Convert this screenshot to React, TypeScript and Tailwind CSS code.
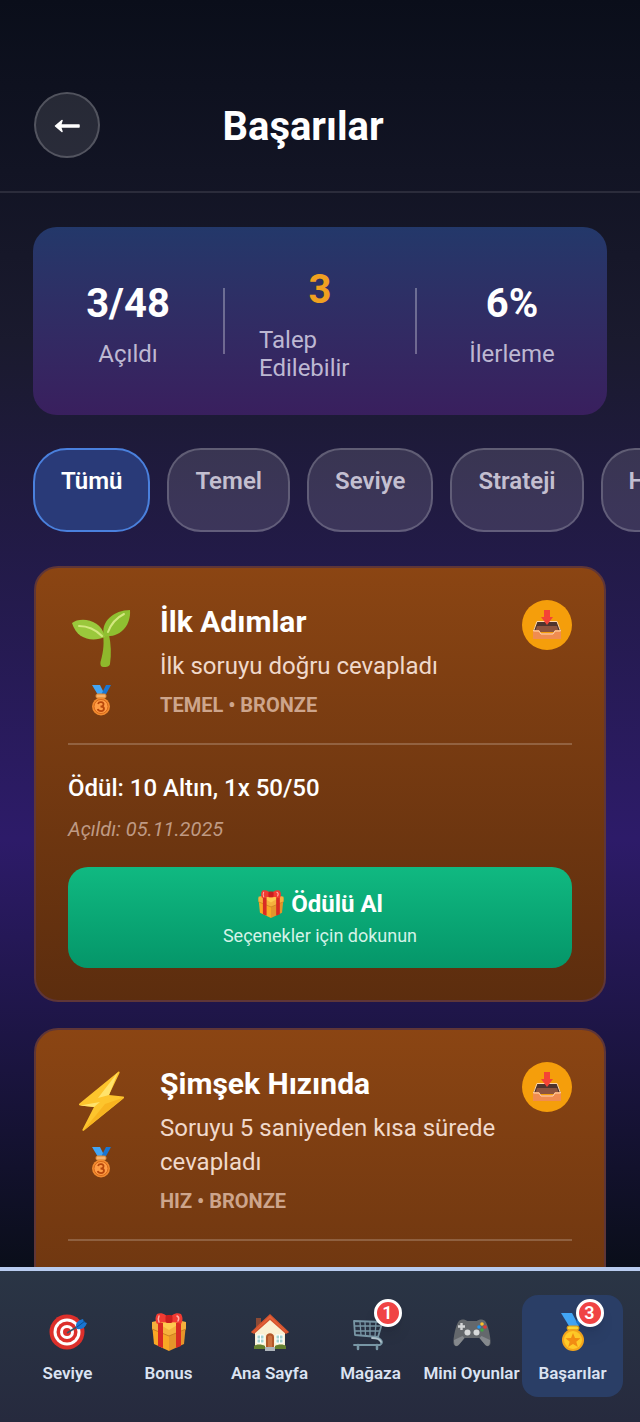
import { useState } from "react";
import type { ReactNode } from "react";

const SproutIcon = ({ className }: { className?: string }) => (
  <svg viewBox="0 0 60 60" className={className} aria-hidden="true">
    <path d="M32 25c1 8 1 16-2.500 28-.5 3 .5 5 3 5 3.500 0 6-.5 6.500-3 1.500-10 1-20-1-29z" fill="#8fb82c" />
    <path d="M1 14c7-6 29-5 33 14-12 5-28 3-33-14z" fill="#9ac83c" />
    <path d="M33 27C29 13 43 1 59 1c1 15-9 28-26 26z" fill="#8fc031" />
    <path d="M8 17c9 0 16 3 23 10M37 23C40 15 45 9 53 5" fill="none" stroke="#d3e87f" strokeWidth="2" strokeLinecap="round" />
  </svg>
);

const BoltIcon = ({ className }: { className?: string }) => (
  <svg viewBox="0 0 60 60" className={className} aria-hidden="true">
    <path d="M47 1c1-1 2 0 1.500 1L38 24l14 1.500c1 0 1.500 1 .5 2L13 59.500c-1 1-2 0-1.500-1L23 36 9 34.500c-1 0-1.500-1-.5-2z" fill="#fdc52d" />
    <path d="M47 1 27 27l11-3zM9 34.500 23 36l6-5z" fill="#ffe36b" />
    <path d="M53 26.500 12 60l22-27z" fill="#f6ab18" opacity=".65" />
  </svg>
);

const BronzeMedalIcon = ({ className }: { className?: string }) => (
  <svg viewBox="0 0 32 32" className={className} aria-hidden="true">
    <path d="M7 1h8l5 10h-7z" fill="#42a5f5" />
    <path d="M17 9l4-8h5l-6 11h-4z" fill="#1976d2" />
    <rect x="11" y="10" width="10" height="4" rx="1.500" fill="#f6b26b" stroke="#d9822b" />
    <circle cx="16" cy="22.500" r="9" fill="#f18b30" />
    <circle cx="16" cy="22.500" r="7" fill="#ff9d45" stroke="#d86818" />
    <path d="M13 20c1-3 6-2 5.500.5-.2 1.500-1.500 2-3 2 2 0 3.500.8 3.500 2.300 0 3-5.500 3-6.300.2" fill="none" stroke="#b9480c" strokeWidth="1.800" />
  </svg>
);

const InboxIcon = ({ className }: { className?: string }) => (
  <svg viewBox="0 0 30 30" className={className} aria-hidden="true">
    <path d="M5 12h20l4 9H1z" fill="#4e342e" />
    <path d="M5 16h20l2 6H3z" fill="#8d543d" />
    <path d="M1 20h6l2 3h12l2-3h6v9H1z" fill="#f08c50" />
    <path d="M5 11.500h20L28.500 21H23l-2 3H9l-2-3H1.500z" fill="none" stroke="#ffd7a8" strokeLinejoin="round" />
    <path d="M12 0h6v7h3l-6 8-6-8h3z" fill="#f44336" />
  </svg>
);

const GiftIcon = ({ className }: { className?: string }) => (
  <svg viewBox="0 0 36 38" className={className} aria-hidden="true">
    <path d="M1 11l17 6v21L3 31z" fill="#f9a825" />
    <path d="M35 11l-17 6v21l15-7z" fill="#e6952a" />
    <path d="M1 9l17-4 17 4v7l-17 7L1 16z" fill="#f5b13d" />
    <path d="M8 11l10-3 10 3-10 6z" fill="#ffca4f" />
    <path d="M1 16l17 7 17-7" fill="none" stroke="#ce8020" />
    <path d="M7 10h5v25l-5-2zM25 10h5v23l-5 2z" fill="#d92b23" />
    <path d="M6 1c5-2 10 1 12 5 2-4 7-7 12-5 2 3 2 7 0 10-5-2-8-2-12-1-4-1-8-1-12 1-2-3-2-7 0-10z" fill="#f13b32" />
    <path d="M8 3c-1 2-1 4 0 6M26 3c2 1 2 3 1 5" stroke="#ffb0a8" strokeWidth="1.500" fill="none" strokeLinecap="round" />
    <rect x="14.500" y="2" width="7" height="8" rx="2" fill="#c91f1f" />
  </svg>
);

const TargetIcon = ({ className }: { className?: string }) => (
  <svg viewBox="0 0 38 38" className={className} aria-hidden="true">
    <circle cx="18" cy="19" r="17.500" fill="#dc2f2b" />
    <circle cx="18" cy="19" r="13.500" fill="#fff" />
    <circle cx="18" cy="19" r="10.500" fill="#dc2f2b" />
    <circle cx="18" cy="19" r="7" fill="#fff" />
    <circle cx="18" cy="19" r="4" fill="#dc2f2b" />
    <path d="M18 20 31 12" stroke="#33566b" strokeWidth="1.500" />
    <path d="M27 13c0-4 3-6 7-7l1 3 3 1c-2 5-5 7-10 6z" fill="#1976d2" />
    <path d="M28 14l8-6" stroke="#0b4f92" />
  </svg>
);

const HomeIcon = ({ className }: { className?: string }) => (
  <svg viewBox="0 0 38 38" className={className} aria-hidden="true">
    <path d="M5 5h5v12H5z" fill="#8b4a35" />
    <path d="M4 19 19 4l15 15v17H4z" fill="#faf0d3" />
    <path d="M1 19 19 2l18 17-2 1L19 6 3 20z" fill="#e8623b" stroke="#d4552f" strokeWidth="1.500" />
    <path d="M15 35V24c0-5 8-5 8 0v11z" fill="#b35629" />
    <path d="M17 34V24c0-2 4-2 4 0v10z" fill="#cc7240" />
    <path d="M6 22h7v8H6zM25 22h7v8h-7z" fill="#a3d3d0" stroke="#fff" />
    <path d="M9.500 22v8M6 26h7M28.500 22v8M25 26h7" stroke="#fff" />
    <path d="M3 33c2-2 8-2 11 0v3H3zM24 33c3-2 9-2 11 0v3H24z" fill="#63802f" />
    <path d="M14 34h10v4H14z" fill="#aeb5bb" />
  </svg>
);

const CartIcon = ({ className }: { className?: string }) => (
  <svg viewBox="0 0 38 38" className={className} aria-hidden="true">
    <g fill="none" stroke="#7896a5" strokeWidth="1.800" strokeLinecap="round" strokeLinejoin="round">
      <path d="M35 4h-3l-6 20-23-2L2 8l28 1" />
      <path d="M3 13h26M3 18h24M8 9l1 13M13 9l.5 13M18 9v14M24 9l-1 14" strokeWidth="1.300" />
      <path d="M25 24c6 3 6 6 3 8H2" />
      <path d="M20 25c5 0 8 1 9 4" stroke="#b0c4cd" />
      <path d="M6 32v4M25 32v4" strokeWidth="2.500" />
    </g>
  </svg>
);

const GamepadIcon = ({ className }: { className?: string }) => (
  <svg viewBox="0 0 38 38" className={className} aria-hidden="true">
    <path d="M6 8c2-2 6-2 8 0h10c2-2 6-2 8 0 3 3 6 17 5.500 22-.5 4-4 4-6 1l-5-6h-15l-5 6c-2 3-5.500 3-6-1C0 25 3 11 6 8z" fill="#64686c" />
    <path d="M1 27c0 7 3 7 5.500 4l5-6-2-2zM37 27c0 7-3 7-5.500 4l-5-6 2-2z" fill="#85898d" />
    <path d="M8.500 10v7M5 13.500h7" stroke="#d3d5d6" strokeWidth="2.400" />
    <circle cx="14.500" cy="19.500" r="3" fill="#d7d9da" />
    <circle cx="23.500" cy="19.500" r="3" fill="#d7d9da" />
    <circle cx="29" cy="11" r="1.800" fill="#fbc02d" />
    <circle cx="32" cy="14" r="1.800" fill="#e53935" />
    <circle cx="26" cy="14" r="1.800" fill="#2196f3" />
    <circle cx="29" cy="17" r="1.800" fill="#43a047" />
  </svg>
);

const GoldMedalIcon = ({ className }: { className?: string }) => (
  <svg viewBox="0 0 38 38" className={className} aria-hidden="true">
    <path d="M7 0h11l7 13h-10z" fill="#42a5f5" />
    <path d="M22 9l4-9h5l-6 13z" fill="#1976d2" />
    <rect x="13" y="13" width="12" height="4" rx="2" fill="#fdd835" stroke="#e09a14" />
    <circle cx="19" cy="27" r="11" fill="#f4a51c" />
    <circle cx="19" cy="27" r="9" fill="#ffca28" />
    <path d="M19 20l2 5 5.500.3-4.200 3.500 1.500 5.200-4.800-3-4.800 3 1.500-5.200-4.200-3.500L17 25z" fill="#f28c13" />
  </svg>
);

const stats = [
  { value: "3/48", label: "Açıldı", color: "text-white" },
  { value: "3", label: "Talep Edilebilir", color: "text-[#f0a020]" },
  { value: "6%", label: "İlerleme", color: "text-white" },
];

const filters = ["Tümü", "Temel", "Seviye", "Strateji", "Hız"];

const achievements = [
  {
    title: "İlk Adımlar",
    description: "İlk soruyu doğru cevapladı",
    category: "TEMEL • BRONZE",
    icon: <SproutIcon className="size-[60px]" />,
    reward: "Ödül: 10 Altın, 1x 50/50",
    unlocked: "Açıldı: 05.11.2025",
  },
  {
    title: "Şimşek Hızında",
    description: "Soruyu 5 saniyeden kısa sürede cevapladı",
    category: "HIZ • BRONZE",
    icon: <BoltIcon className="size-[60px]" />,
  },
];

const navItems = [
  { label: "Seviye", icon: <TargetIcon className="size-[38px]" /> },
  { label: "Bonus", icon: <GiftIcon className="size-[38px]" /> },
  { label: "Ana Sayfa", icon: <HomeIcon className="size-[38px]" /> },
  { label: "Mağaza", icon: <CartIcon className="size-[38px]" />, badge: 1 },
  { label: "Mini Oyunlar", icon: <GamepadIcon className="size-[38px]" /> },
  { label: "Başarılar", icon: <GoldMedalIcon className="size-[38px]" />, badge: 3, active: true },
];

interface AchievementProps {
  title: string;
  description: string;
  category: string;
  icon: ReactNode;
  reward?: string;
  unlocked?: string;
}

const AchievementCard = ({ title, description, category, icon, reward, unlocked }: AchievementProps) => (
  <article className="min-h-[435px] rounded-3xl border-2 border-[#5f3638] bg-linear-to-b from-[#8b4513] to-[#5c2d0e] bg-origin-border p-8">
    <div className="flex items-start gap-[26px] border-b-2 border-white/20 pb-6">
      <div className="flex w-[66px] shrink-0 flex-col items-center gap-[15px] pt-[9px]">
        {icon}
        <BronzeMedalIcon className="size-8" />
      </div>
      <div className="min-w-0 flex-1">
        <h2 className="text-[30px] leading-[44px] font-bold text-white">{title}</h2>
        <p className="mt-[5px] text-2xl leading-[34px] text-[#f0d9cb]">{description}</p>
        <p className="mt-2 text-xl leading-7 font-bold text-[#cda58c]">{category}</p>
      </div>
      <button type="button" aria-label="Talep et" className="flex size-[50px] shrink-0 items-center justify-center rounded-full bg-[#f59e0b]">
        <InboxIcon className="size-[30px]" />
      </button>
    </div>
    {reward && (
      <div className="pt-7">
        <p className="text-2xl leading-[30px] font-medium text-white">{reward}</p>
        <p className="mt-3 text-xl leading-7 text-[#bf9a84] italic">{unlocked}</p>
        <button type="button" className="mt-6 flex w-full flex-col items-center rounded-[20px] bg-linear-to-b from-[#10b981] to-[#059669] pt-[21px] pb-4 text-white">
          <span className="flex items-center gap-1.5 text-2xl leading-8 font-bold">
            <GiftIcon className="size-7" />
            Ödülü Al
          </span>
          <span className="text-lg leading-8 text-[#d5f3e8]">Seçenekler için dokunun</span>
        </button>
      </div>
    )}
  </article>
);

export default function App() {
  const [filter, setFilter] = useState("Tümü");

  return (
    <div className="flex h-screen flex-col bg-[linear-gradient(to_bottom,#0a0e1a,#1a1a2e_24%,#2d1b69_59%,#0a0e1a_89%)] font-[Roboto,sans-serif]">
      <header className="flex shrink-0 items-center justify-between border-b-2 border-white/10 px-[34px] pt-[92px] pb-[33px]">
        <button type="button" aria-label="Geri" className="flex size-[66px] items-center justify-center rounded-full border-2 border-white/20 bg-white/10">
          <svg viewBox="0 0 26 16" className="h-4 w-[26px]" aria-hidden="true">
            <path d="M1.500 9 8 3.500 6.500 8H25v2H6.500L8 14.500z" fill="#fff" stroke="#fff" strokeWidth="1.500" strokeLinejoin="round" />
          </svg>
        </button>
        <h1 className="pt-1 text-[40px] leading-[52px] font-bold text-white">Başarılar</h1>
        <div className="w-[100px]" />
      </header>

      <main className="min-h-0 flex-1 overflow-y-auto pt-[34px] pb-8 [scrollbar-width:none]">
        <section className="mx-[33px] flex items-center rounded-3xl bg-linear-to-b from-[#23386a] to-[#391f5e] py-[33px]">
          {stats.map((stat, i) => (
            <div key={stat.label} className="contents">
              {i > 0 && <div className="h-[66px] w-0.5 bg-white/30" />}
              <div className="flex flex-1 flex-col items-center px-[34px]">
                <span className={`text-[40px] leading-[60px] font-bold ${stat.color}`}>{stat.value}</span>
                <span className="mt-1.5 text-2xl leading-7 text-[#bdb8d2]">{stat.label}</span>
              </div>
            </div>
          ))}
        </section>

        <div className="mt-[33px] flex gap-[17px] overflow-x-auto px-[33px] [scrollbar-width:none]">
          {filters.map((name) => (
            <button
              key={name}
              type="button"
              onClick={() => setFilter(name)}
              className={`flex h-[84px] shrink-0 items-start rounded-[34px] border-2 px-[26px] pt-[15px] text-2xl leading-8 font-semibold ${
                filter === name
                  ? "border-[#4a80dd] bg-[#293a78] text-white"
                  : "border-white/20 bg-white/12 text-[#c3bfd0]"
              }`}
            >
              {name}
            </button>
          ))}
        </div>

        <div className="mx-[34px] mt-[34px] flex flex-col gap-[26px]">
          {achievements.map((item) => (
            <AchievementCard key={item.title} {...item} />
          ))}
        </div>
      </main>

      <nav className="flex shrink-0 border-t-4 border-[#b8cbef] bg-linear-to-b from-[#2a3545] to-[#262a3e] px-[17px] pt-6 pb-[25px]">
        {navItems.map((item) => (
          <a
            key={item.label}
            href="#"
            className={`flex min-w-0 flex-1 flex-col items-center rounded-2xl pt-[18px] pb-3 ${item.active ? "bg-[#2a3e66]" : ""}`}
          >
            <span className="relative">
              {item.icon}
              {item.badge && (
                <span className="absolute -top-3.5 -right-3 flex size-7 items-center justify-center rounded-full border-3 border-white bg-[#f04444] text-lg leading-none font-semibold text-white shadow-lg">
                  {item.badge}
                </span>
              )}
            </span>
            <span className="mt-2.5 text-[17px] leading-6 font-semibold whitespace-nowrap text-[#dbe3f2]">{item.label}</span>
          </a>
        ))}
      </nav>
    </div>
  );
}
